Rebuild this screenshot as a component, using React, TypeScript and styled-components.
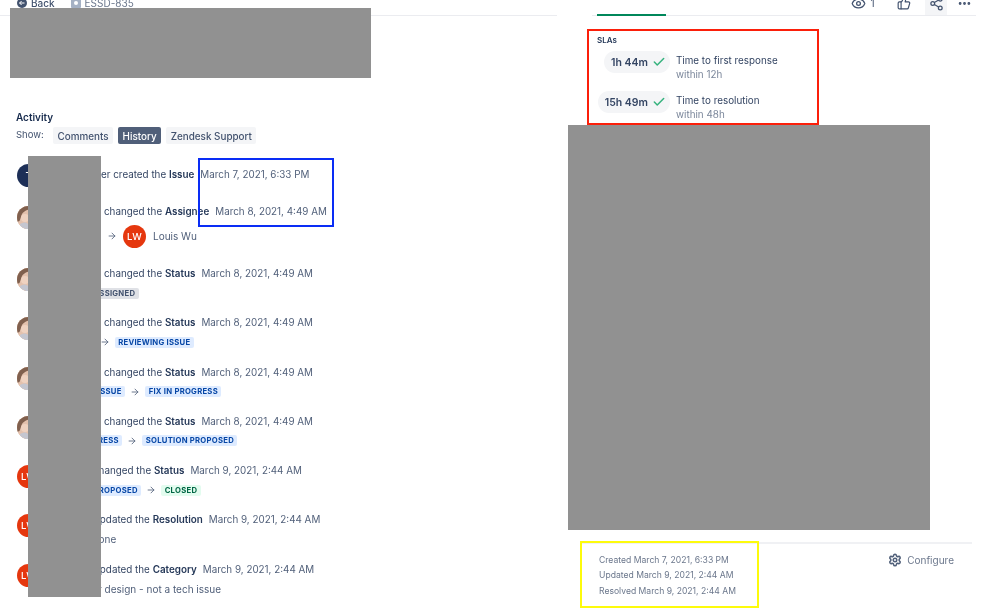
import React from "react";
import styled, { createGlobalStyle } from "styled-components";
import { ArrowRight, Check, Ellipsis, Eye, Settings, Share2, ThumbsUp } from "lucide-react";

const Global = createGlobalStyle`
  html, body { margin: 0; padding: 0; background: #fff; }
  body { font-family: Inter, "Liberation Sans", sans-serif; color: #344563; }
`;

const Page = styled.div`
  position: relative;
  width: 999px;
  height: 613px;
  overflow: hidden;
  display: flex;
  background: #fff;
  filter: blur(0.35px);
`;

const LeftColumn = styled.main`
  width: 557px;
  flex: none;
  display: flex;
  flex-direction: column;
`;

const RightColumn = styled.aside`
  flex: 1;
  display: flex;
  flex-direction: column;
  min-width: 0;
`;

const Breadcrumbs = styled.nav`
  height: 16px;
  box-sizing: border-box;
  border-bottom: 1px solid #ebecf0;
  padding-left: 17px;
  display: flex;
  align-items: flex-start;
  font-size: 10px;
  line-height: 14px;
  overflow: hidden;
`;

const Crumb = styled.span<{ $muted?: boolean; $gap: number }>`
  display: inline-flex;
  align-items: center;
  gap: 4px;
  margin-top: -4px;
  margin-right: ${(p) => p.$gap}px;
  font-weight: ${(p) => (p.$muted ? 400 : 500)};
  color: ${(p) => (p.$muted ? "#6b778c" : "#42526e")};
`;

const Activity = styled.section`
  margin-top: 94px;
  padding-left: 16px;
`;

const Heading = styled.h2`
  margin: 0;
  font-size: 10px;
  line-height: 14px;
  font-weight: 600;
  color: #172b4d;
`;

const ShowRow = styled.div`
  display: flex;
  align-items: center;
  margin-top: 3px;
  height: 17px;
  font-size: 9.5px;
  color: #42526e;
`;

const ShowLabel = styled.span`
  width: 37px;
  margin-top: -3px;
`;

const Tab = styled.button<{ $active?: boolean }>`
  border: 0;
  height: 17px;
  padding: 0 4.5px;
  margin-right: 5px;
  border-radius: 2px;
  font-family: inherit;
  font-size: 9.9px;
  font-weight: 500;
  background: ${(p) => (p.$active ? "#505f79" : "#f4f5f7")};
  color: ${(p) => (p.$active ? "#fff" : "#42526e")};
`;

const Feed = styled.ol`
  list-style: none;
  margin: 20px 0 0;
  padding: 0 0 0 1px;
`;

const FeedItem = styled.li<{ $h?: number }>`
  display: flex;
  height: ${(p) => p.$h ?? 49.25}px;
`;

const AvatarSlot = styled.div<{ $top: number }>`
  width: 24px;
  flex: none;
  padding-top: ${(p) => p.$top}px;
`;

const Avatar = styled.span<{ $bg: string }>`
  display: flex;
  align-items: center;
  justify-content: center;
  width: 23px;
  height: 23px;
  border-radius: 50%;
  overflow: hidden;
  background: ${(p) => p.$bg};
  color: #fff;
  font-size: 9.5px;
  font-weight: 500;
`;

const Body = styled.div`
  min-width: 0;
  flex: 1;
`;

const Head = styled.div<{ $x: number }>`
  height: 20px;
  line-height: 20px;
  padding-left: ${(p) => p.$x}px;
  font-size: 9.85px;
  white-space: nowrap;
  color: #344563;
`;

const Strong = styled.b`
  font-weight: 600;
  color: #253858;
`;

const When = styled.time`
  margin-left: 6px;
  color: #505f79;
`;

const Detail = styled.div<{ $x: number; $top?: number }>`
  display: flex;
  align-items: center;
  height: 20px;
  margin-top: ${(p) => p.$top ?? 0}px;
  padding-left: ${(p) => p.$x}px;
  font-size: 10px;
  color: #505f79;
  white-space: nowrap;
`;

const Lozenge = styled.span<{ $tone: "grey" | "blue" | "green" }>`
  display: inline-block;
  padding: 0 3.5px;
  height: 11px;
  line-height: 11px;
  border-radius: 2px;
  font-size: 7.7px;
  font-weight: 700;
  letter-spacing: 0.25px;
  background: ${(p) => ({ grey: "#dfe1e6", blue: "#deebff", green: "#e3fcef" }[p.$tone])};
  color: ${(p) => ({ grey: "#42526e", blue: "#0747a6", green: "#006644" }[p.$tone])};
`;

const Arrow = styled(ArrowRight)<{ $lead?: number; $trail?: number }>`
  flex: none;
  width: 10px;
  height: 10px;
  margin: 0 ${(p) => p.$trail ?? 5}px 0 ${(p) => p.$lead ?? 5}px;
  color: #505f79;
`;

const PersonGap = styled.span`
  display: inline-flex;
  margin-right: 7px;
`;

const ActionBar = styled.div`
  position: relative;
  height: 16px;
  box-sizing: border-box;
  margin: 0 23px 0 35px;
  border-bottom: 1px solid #ebecf0;
  display: flex;
  justify-content: flex-end;
  align-items: flex-start;
  color: #42526e;
  font-size: 10px;
`;

const ProgressBar = styled.span`
  position: absolute;
  left: 5px;
  bottom: -1px;
  width: 69px;
  height: 2px;
  background: #00875a;
`;

const ActionItem = styled.span<{ $w: number; $before?: number; $active?: boolean }>`
  display: flex;
  justify-content: center;
  gap: 4px;
  width: ${(p) => p.$w}px;
  margin-left: ${(p) => p.$before ?? 0}px;
  height: 15px;
  overflow: hidden;
  background: ${(p) => (p.$active ? "#f4f5f7" : "transparent")};
  svg { margin-top: -4px; flex: none; }
`;

const Count = styled.span`
  margin-top: -3px;
  line-height: 12px;
`;

const Slas = styled.section`
  margin: 18px 0 0 40px;
`;

const SlaTitle = styled.h3`
  margin: 0;
  font-size: 8px;
  line-height: 12px;
  font-weight: 600;
  color: #253858;
`;

const SlaRow = styled.div`
  display: flex;
  align-items: flex-start;
  margin-top: 5px;
  height: 35px;
`;

const PillSlot = styled.div`
  width: 73px;
  margin-right: 6px;
  display: flex;
  justify-content: flex-end;
`;

const Pill = styled.span`
  display: inline-flex;
  align-items: center;
  gap: 4px;
  height: 22px;
  padding: 0 4px 0 7px;
  border-radius: 11px;
  background: #f4f5f7;
  font-size: 10.5px;
  font-weight: 600;
  color: #344563;
  white-space: nowrap;
`;

const SlaText = styled.div`
  font-size: 9.85px;
  line-height: 14px;
  color: #344563;
  white-space: nowrap;
  margin-top: 2px;
`;

const SlaSub = styled.div`
  color: #7a869a;
`;

const Footer = styled.footer`
  margin: auto 27px 0 23px;
  height: 71px;
  box-sizing: border-box;
  border-top: 2px solid #f0f1f4;
  padding: 9px 18px 0 19px;
  display: flex;
  justify-content: space-between;
  align-items: flex-start;
`;

const Stamps = styled.div`
  font-size: 8.6px;
  color: #6b778c;
`;

const Stamp = styled.div`
  height: 15.3px;
  line-height: 15px;
  white-space: nowrap;
`;

const Configure = styled.span`
  display: inline-flex;
  align-items: center;
  gap: 5px;
  font-size: 10px;
  color: #6b778c;
  line-height: 14px;
  svg { color: #505f79; }
`;

const Redaction = styled.div<{ $x: number; $y: number; $w: number; $h: number }>`
  position: absolute;
  left: ${(p) => p.$x}px;
  top: ${(p) => p.$y}px;
  width: ${(p) => p.$w}px;
  height: ${(p) => p.$h}px;
  background: #919191;
`;

const Frame = styled.div<{ $x: number; $y: number; $w: number; $h: number; $color: string }>`
  position: absolute;
  box-sizing: border-box;
  left: ${(p) => p.$x}px;
  top: ${(p) => p.$y}px;
  width: ${(p) => p.$w}px;
  height: ${(p) => p.$h}px;
  border: 2.7px solid ${(p) => p.$color};
`;

const BackIcon = () => (
  <svg width="10" height="10" viewBox="0 0 10 10">
    <circle cx="5" cy="5" r="5" fill="#42526e" />
    <path d="M2.5 5h5M4.6 3 2.6 5l2 2" stroke="#fff" strokeWidth="1" fill="none" />
  </svg>
);

const IssueIcon = () => (
  <svg width="10" height="10" viewBox="0 0 10 10">
    <rect width="10" height="10" rx="1" fill="#a5b1c4" />
    <circle cx="5" cy="5" r="2" fill="#fff" />
  </svg>
);

const Photo = () => (
  <svg width="23" height="23" viewBox="0 0 23 23">
    <rect width="23" height="23" fill="#e3c1ad" />
    <path d="M0 0h23v3C15 2 8 3 5 8L2.5 15 0 16z" fill="#80604e" />
    <path d="M3 18c3-2 6-2 8 0l1 5H3z" fill="#c4c6d0" />
    <circle cx="8" cy="12" r="4" fill="#efd2c0" />
  </svg>
);

const Photo2 = () => (
  <Avatar $bg="#d5ad97"><Photo /></Avatar>
);

const Lw = () => <Avatar $bg="#e5370e">LW</Avatar>;

type Entry = {
  avatar: React.ReactNode;
  top: number;
  x: number;
  verb: string;
  field: string;
  h?: number;
  detailX?: number;
  detail?: React.ReactNode;
  when: string;
};

const M8 = "March 8, 2021, 4:49 AM";
const M9 = "March 9, 2021, 2:44 AM";

const entries: Entry[] = [
  { avatar: <Avatar $bg="#1d2f57">T</Avatar>, top: 0, x: 60, verb: "er created the ", field: "Issue", h: 37, when: "March 7, 2021, 6:33 PM" },
  {
    avatar: <Photo2 />, top: 5, x: 63, verb: "changed the ", field: "Assignee", h: 62, when: M8, detailX: 0, detail: (
      <>
        <Arrow $lead={66} $trail={6} />
        <PersonGap><Lw /></PersonGap>Louis Wu
      </>
    ),
  },
  { avatar: <Photo2 />, top: 5, x: 63, verb: "changed the ", field: "Status", when: M8, detailX: 49, detail: <Lozenge $tone="grey">ASSIGNED</Lozenge> },
  {
    avatar: <Photo2 />, top: 5, x: 63, verb: "changed the ", field: "Status", when: M8, detailX: 5, detail: (
      <>
        <Lozenge $tone="grey">ASSIGNED</Lozenge><Arrow /><Lozenge $tone="blue">REVIEWING ISSUE</Lozenge>
      </>
    ),
  },
  {
    avatar: <Photo2 />, top: 5, x: 63, verb: "changed the ", field: "Status", when: M8, detailX: 5, detail: (
      <>
        <Lozenge $tone="blue">REVIEWING ISSUE</Lozenge><Arrow /><Lozenge $tone="blue">FIX IN PROGRESS</Lozenge>
      </>
    ),
  },
  {
    avatar: <Photo2 />, top: 5, x: 63, verb: "changed the ", field: "Status", when: M8, detailX: 5, detail: (
      <>
        <Lozenge $tone="blue">FIX IN PROGRESS</Lozenge><Arrow /><Lozenge $tone="blue">SOLUTION PROPOSED</Lozenge>
      </>
    ),
  },
  {
    avatar: <Lw />, top: 5, x: 52, verb: "changed the ", field: "Status", when: M9, detailX: 5, detail: (
      <>
        <Lozenge $tone="blue">SOLUTION PROPOSED</Lozenge><Arrow /><Lozenge $tone="green">CLOSED</Lozenge>
      </>
    ),
  },
  { avatar: <Lw />, top: 5, x: 53, verb: "updated the ", field: "Resolution", when: M9, detailX: 50, detail: "None" },
  { avatar: <Lw />, top: 5, x: 53, verb: "updated the ", field: "Category", when: M9, detailX: 57, detail: "r design - not a tech issue" },
];

export default function App() {
  return (
    <Page>
      <Global />
      <LeftColumn>
        <Breadcrumbs>
          <Crumb $gap={16}><BackIcon />Back</Crumb>
          <Crumb $muted $gap={0}><IssueIcon />ESSD-835</Crumb>
        </Breadcrumbs>
        <Activity>
          <Heading>Activity</Heading>
          <ShowRow>
            <ShowLabel>Show:</ShowLabel>
            <Tab>Comments</Tab>
            <Tab $active>History</Tab>
            <Tab>Zendesk Support</Tab>
          </ShowRow>
          <Feed>
            {entries.map((e, i) => (
              <FeedItem key={i} $h={e.h}>
                <AvatarSlot $top={e.top}>{e.avatar}</AvatarSlot>
                <Body>
                  <Head $x={e.x}>
                    {e.verb}<Strong>{e.field}</Strong><When>{e.when}</When>
                  </Head>
                  {e.detail && (
                    <Detail $x={e.detailX ?? 0} $top={i === 1 ? 5 : 0}>{e.detail}</Detail>
                  )}
                </Body>
              </FeedItem>
            ))}
          </Feed>
        </Activity>
      </LeftColumn>
      <RightColumn>
        <ActionBar>
          <ProgressBar />
          <ActionItem $w={26}><Eye size={15} strokeWidth={2} /><Count>1</Count></ActionItem>
          <ActionItem $w={15} $before={20}><ThumbsUp size={14} strokeWidth={2} /></ActionItem>
          <ActionItem $w={22} $before={14} $active><Share2 size={15} strokeWidth={2} /></ActionItem>
          <ActionItem $w={24} $before={5}><Ellipsis size={15} strokeWidth={2.5} /></ActionItem>
        </ActionBar>
        <Slas>
          <SlaTitle>SLAs</SlaTitle>
          <SlaRow>
            <PillSlot><Pill>1h 44m<Check size={14} color="#36b37e" strokeWidth={2.6} /></Pill></PillSlot>
            <SlaText>Time to first response<SlaSub>within 12h</SlaSub></SlaText>
          </SlaRow>
          <SlaRow>
            <PillSlot><Pill>15h 49m<Check size={14} color="#36b37e" strokeWidth={2.6} /></Pill></PillSlot>
            <SlaText>Time to resolution<SlaSub>within 48h</SlaSub></SlaText>
          </SlaRow>
        </Slas>
        <Footer>
          <Stamps>
            <Stamp>Created March 7, 2021, 6:33 PM</Stamp>
            <Stamp>Updated March 9, 2021, 2:44 AM</Stamp>
            <Stamp>Resolved March 9, 2021, 2:44 AM</Stamp>
          </Stamps>
          <Configure><Settings size={14} strokeWidth={2.6} />Configure</Configure>
        </Footer>
      </RightColumn>
      <Redaction $x={10} $y={8} $w={361} $h={70} />
      <Redaction $x={28} $y={156} $w={73} $h={441} />
      <Redaction $x={568} $y={125} $w={362} $h={405} />
      <Frame $x={198} $y={158} $w={136} $h={69} $color="#0a2df5" />
      <Frame $x={587} $y={29} $w={232} $h={96} $color="#fb1f0a" />
      <Frame $x={580} $y={541} $w={179} $h={67} $color="#fdfb0c" />
    </Page>
  );
}
